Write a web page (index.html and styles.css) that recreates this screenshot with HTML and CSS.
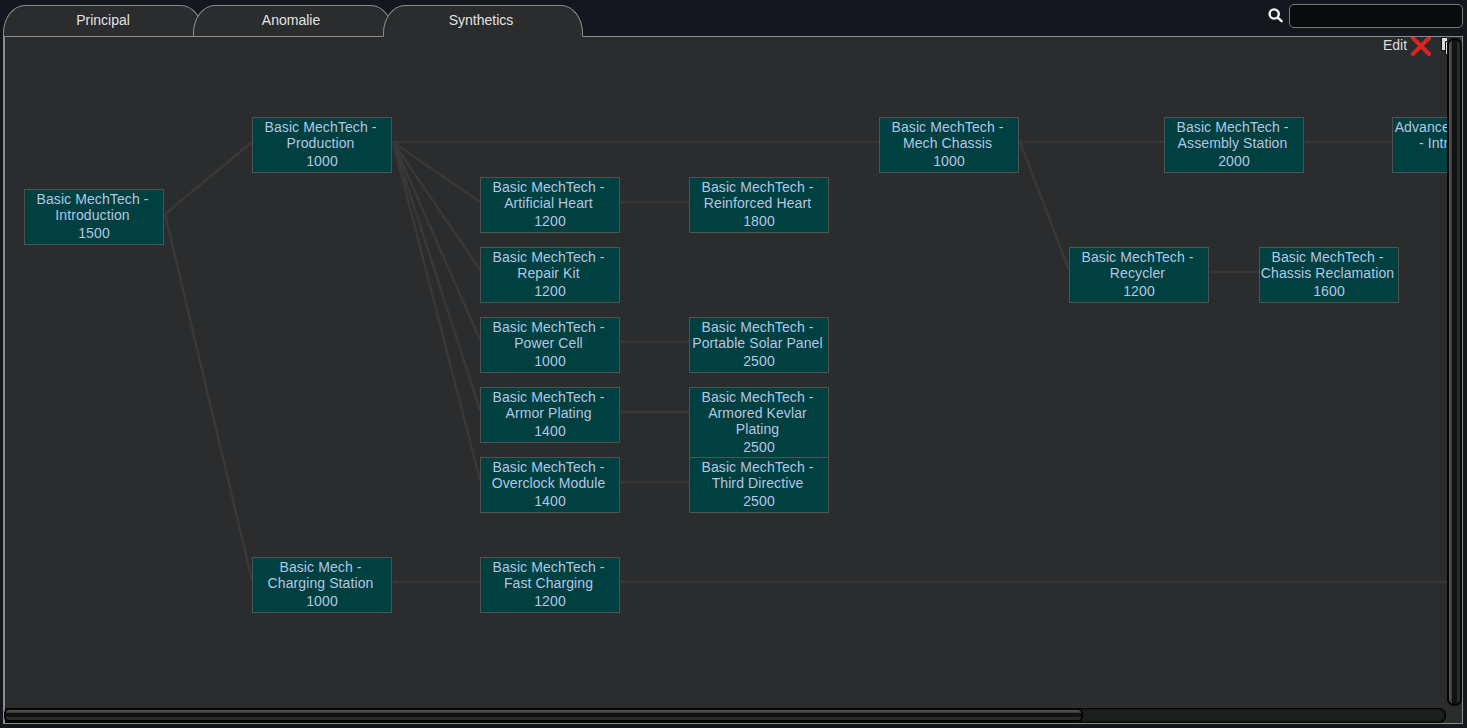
FILE: index.html
```html
<!DOCTYPE html>
<html lang="en">
<head>
    <meta charset="UTF-8">
    <title>Research</title>
    <link rel="stylesheet" href="styles.css">
</head>
<body>

<div class="header">
    <div class="tabs">
        <div class="tab">Principal</div>
        <div class="tab">Anomalie</div>
        <div class="tab active">Synthetics</div>
    </div>
    <div class="search">
        <svg class="search-icon" width="16" height="16" viewBox="0 0 16 16">
            <circle cx="6.2" cy="6" r="4.6"/>
            <path d="M9.8 9.6L13.6 13.2"/>
        </svg>
        <input type="text" class="search-input">
    </div>
</div>

<div class="panel">
    <div class="view">
        <svg class="links" width="1442" height="670" viewBox="5 37 1442 670">
            <path d="M165 214L252 142M165 214L252 580"/>
            <path d="M393 142H879M393 142L480 202M393 142L480 270M393 142L480 340M393 142L480 410M393 142L480 480"/>
            <path d="M621 202H689M621 342H689M621 412H689M621 482H689"/>
            <path d="M1020 142H1164M1020 142L1069 270M1210 272H1259M1305 142H1392"/>
            <path d="M393 582H480M621 582H1447"/>
        </svg>

        <div class="node col-1 row-3">Basic MechTech - Introduction<span class="cost">1500</span></div>
        <div class="node col-2 row-1">Basic MechTech - Production<span class="cost">1000</span></div>
        <div class="node col-2 row-8">Basic Mech - <br>Charging Station<span class="cost">1000</span></div>

        <div class="node col-3 row-2">Basic MechTech - Artificial Heart<span class="cost">1200</span></div>
        <div class="node col-3 row-4">Basic MechTech - Repair Kit<span class="cost">1200</span></div>
        <div class="node col-3 row-5">Basic MechTech - Power Cell<span class="cost">1000</span></div>
        <div class="node col-3 row-6">Basic MechTech - Armor Plating<span class="cost">1400</span></div>
        <div class="node col-3 row-7">Basic MechTech - Overclock Module<span class="cost">1400</span></div>
        <div class="node col-3 row-8">Basic MechTech - Fast Charging<span class="cost">1200</span></div>

        <div class="node col-4 row-2">Basic MechTech - Reinforced Heart<span class="cost">1800</span></div>
        <div class="node col-4 row-5">Basic MechTech - Portable Solar Panel<span class="cost">2500</span></div>
        <div class="node col-4 row-6">Basic MechTech - Armored Kevlar Plating<span class="cost">2500</span></div>
        <div class="node col-4 row-7">Basic MechTech - Third Directive<span class="cost">2500</span></div>

        <div class="node col-5 row-1">Basic MechTech - Mech Chassis<span class="cost">1000</span></div>
        <div class="node col-6 row-4">Basic MechTech - Recycler<span class="cost">1200</span></div>
        <div class="node col-7 row-1">Basic MechTech - Assembly Station<span class="cost">2000</span></div>
        <div class="node col-8 row-4">Basic MechTech - Chassis Reclamation<span class="cost">1600</span></div>
        <div class="node col-9 row-1">Advanced MechTech - Introduction</div>

        <div class="tools">
            <span>Edit</span>
            <svg class="delete" width="22" height="22" viewBox="0 0 22 22"><path d="M3 3L19 19M19 3L3 19"/></svg>
            <svg class="copy" width="16" height="18" viewBox="0 0 16 18">
                <path d="M.5.5H11V13.5H.5Z"/>
                <path d="M4.5 4.5H15V17.5H4.5Z"/>
            </svg>
        </div>
    </div>
    <div class="vscroll"><div class="vthumb"></div></div>
    <div class="hscroll"><div class="hthumb"></div></div>
</div>

</body>
</html>
```
FILE: styles.css
```css
* {
    box-sizing: border-box;
}
body {
    margin: 0;
    height: 728px;
    padding: 4px 4px 4px 3px;
    overflow: hidden;
    background: #14171d;
    color: #ddd;
    font-family: "Liberation Sans", Arial, sans-serif;
    font-size: 14px;
}
.header {
    display: flex;
    justify-content: space-between;
    height: 32px;
}
.tabs {
    display: flex;
    padding-top: 1px;
}
.tab {
    width: 200px;
    height: 32px;
    margin-right: -10px;
    border: 1px solid #8b8b8b;
    border-radius: 22px 22px 0 0 / 28px 28px 0 0;
    background: #2b2c2e;
    line-height: 28px;
    text-align: center;
    color: #e2e2e2;
}
.tab + .tab {
    padding-right: 4px;
}
.tab.active {
    position: relative;
    z-index: 1;
    border-bottom-color: #2b2c2e;
}
.search {
    display: flex;
    align-items: flex-start;
    gap: 5px;
}
.search-icon {
    margin-top: 4px;
    fill: none;
    stroke: #f4f4f4;
    stroke-width: 2.4;
    stroke-linecap: round;
}
.search-input {
    width: 174px;
    height: 24px;
    border: 1px solid #777a7a;
    border-radius: 5px;
    background: #0a0b0d;
    color: #ddd;
}
.panel {
    display: grid;
    grid-template-columns: 1442px 15px;
    grid-template-rows: 671px 15px;
    width: 1460px;
    height: 688px;
    border: 1px solid #8b8b8b;
    border-left-width: 2px;
    background: #2b2c2e;
}
.view {
    position: relative;
    overflow: hidden;
}
.links {
    position: absolute;
    left: 0;
    top: 0;
    fill: none;
    stroke: #373837;
    stroke-width: 2.6;
}
.node {
    position: absolute;
    width: 140px;
    padding: 1px 3px 2px 0;
    border: 1px solid #50524f;
    background: #004040;
    color: #b4c6e4;
    line-height: 16px;
    letter-spacing: 0.1px;
    text-align: center;
}
.cost {
    display: block;
    margin-right: -3px;
    padding-top: 2px;
    line-height: 17px;
}
.col-1 { left: 19px; }
.col-2 { left: 247px; }
.col-3 { left: 475px; }
.col-4 { left: 684px; }
.col-5 { left: 874px; }
.col-6 { left: 1064px; }
.col-7 { left: 1159px; }
.col-8 { left: 1254px; }
.col-9 { left: 1387px; height: 56px; }
.row-1 { top: 80px; }
.row-2 { top: 140px; }
.row-3 { top: 152px; }
.row-4 { top: 210px; }
.row-5 { top: 280px; }
.row-6 { top: 350px; }
.row-7 { top: 420px; }
.row-8 { top: 520px; }

.tools {
    position: absolute;
    top: -2px;
    left: 1378px;
    display: flex;
    align-items: center;
    line-height: 20px;
}
.tools span {
    margin-bottom: 2px;
}
.delete {
    margin-left: 3px;
    stroke: #dc2424;
    stroke-width: 4;
    stroke-linecap: round;
}
.copy {
    margin-left: 9px;
    fill: #ddd;
    stroke: #111;
}
.vscroll {
    height: 670px;
    padding: 1px 0;
}
.vthumb {
    height: 668px;
    border: 2px solid #050505;
    border-radius: 7px;
    background: linear-gradient(to right, #5a5a5a, #353535 30%, #111 31%, #131313 72%, #2b2b2b 73%);
}
.hscroll {
    width: 1441px;
    height: 15px;
    border-radius: 0 7px 7px 0;
    background: #1d1f1f;
    box-shadow: inset 0 1px 2px #000, inset -1px -1px 2px #000;
}
.hthumb {
    width: 1079px;
    height: 14px;
    margin-left: -1px;
    border: 2px solid #050505;
    border-radius: 5px;
    background: linear-gradient(#5a5a5a, #353535 30%, #111 31%, #131313 72%, #2b2b2b 73%);
}
```
